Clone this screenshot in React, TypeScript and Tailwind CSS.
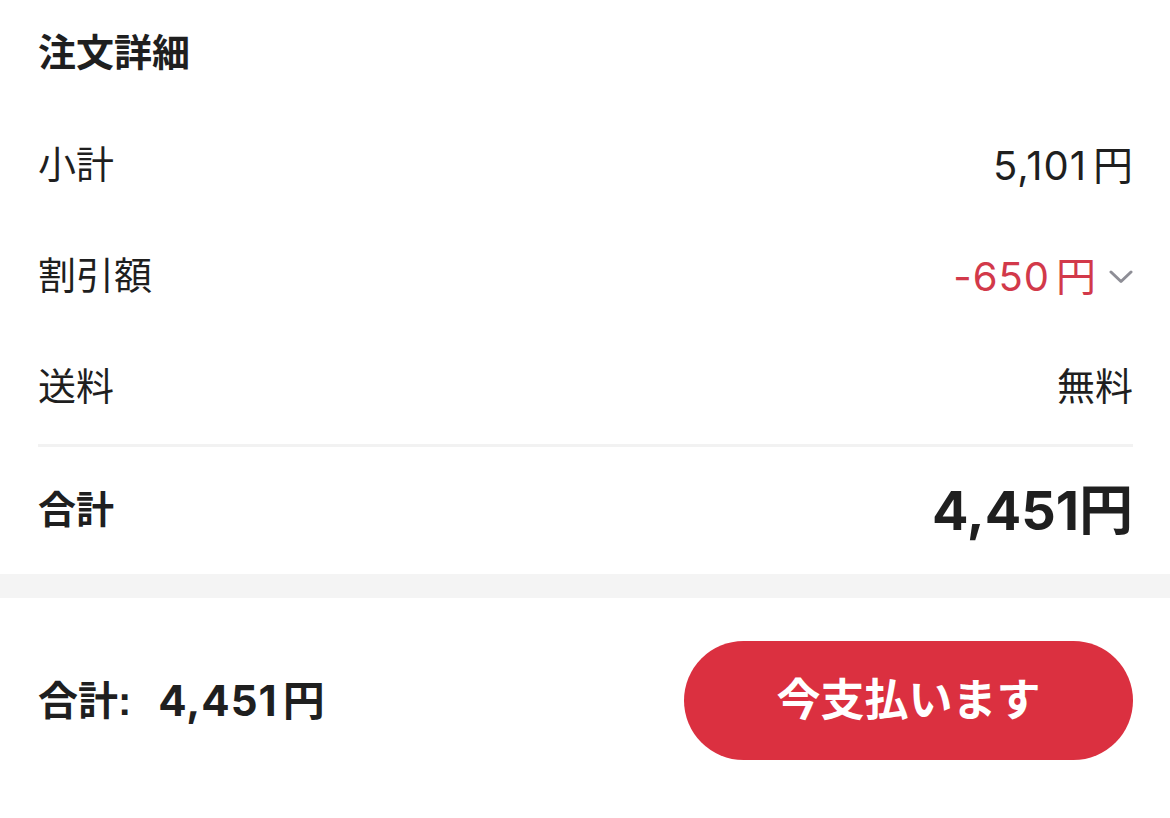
import React from "react";

const font = { fontFamily: '"Liberation Sans", "Noto Sans CJK JP", sans-serif' };
const numFont = { fontFamily: '"Inter", "Noto Sans CJK JP", sans-serif' };

function Chevron() {
  return (
    <svg width="24" height="14" viewBox="0 0 24 14" className="ml-[13px]">
      <path d="M2 2 L12 11.5 L22 2" fill="none" stroke="#8e8e96" strokeWidth="3" strokeLinecap="round" strokeLinejoin="round" />
    </svg>
  );
}

function Yen({ value, className = "" }: { value: string; className?: string }) {
  return (
    <span className={`flex items-baseline ${className}`} style={numFont}>
      <span className="tracking-[1px]">{value}</span>
      <span className="ml-[6px]">円</span>
    </span>
  );
}

function Row({ label, children }: { label: string; children: React.ReactNode }) {
  return (
    <div className="flex h-[111px] items-center justify-between pl-[38px] pr-[37px] text-[38px] text-[#1f1f1f]">
      <span>{label}</span>
      <div className="flex items-center">{children}</div>
    </div>
  );
}

export default function App() {
  return (
    <div className="min-h-[818px] w-full bg-white" style={font}>
      <div className="flex h-[110px] items-center pb-[3px] pl-[38px] text-[38px] font-bold text-[#1f1f1f]">
        注文詳細
      </div>

      <Row label="小計">
        <Yen value="5,101" className="text-[40px]" />
      </Row>
      <Row label="割引額">
        <Yen value="-650" className="text-[40px] text-[#d2394a]" />
        <Chevron />
      </Row>
      <Row label="送料">
        <span>無料</span>
      </Row>

      <div className="ml-[38px] mr-[37px] mt-px h-[3px] bg-[#f2f2f2]" />

      <div className="flex h-[127px] items-center justify-between pl-[38px] pr-[37px] text-[#1f1f1f]">
        <span className="text-[38px] font-bold">合計</span>
        <span className="text-[54px] font-bold" style={numFont}>4,451円</span>
      </div>

      <div className="h-[24px] bg-[#f4f4f4]" />

      <div className="flex h-[220px] items-start justify-between pl-[38px] pr-[37px] pt-[43px]">
        <div className="flex h-[119px] items-center font-bold text-[#1f1f1f]">
          <span className="text-[40px]">合計:</span>
          <span className="ml-[27px] text-[42px]" style={numFont}>
            <span className="tracking-[1px]">4,451</span>
            <span className="ml-[5px]">円</span>
          </span>
        </div>
        <button className="flex h-[119px] w-[449px] items-center justify-center rounded-full bg-[#db3040] text-[44px] font-bold text-white">
          今支払います
        </button>
      </div>
    </div>
  );
}
